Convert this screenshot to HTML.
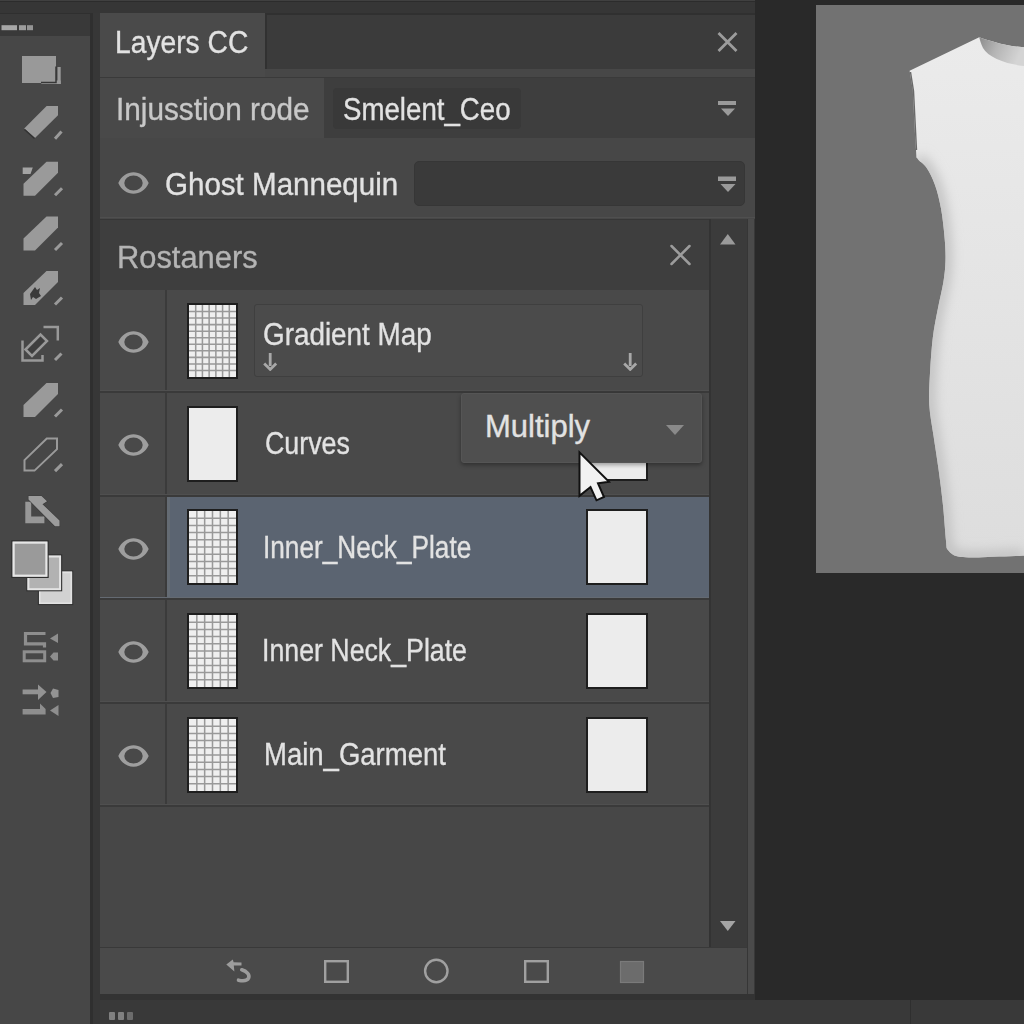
<!DOCTYPE html>
<html><head><meta charset="utf-8">
<style>
*{margin:0;padding:0;box-sizing:border-box}
html,body{width:1024px;height:1024px;overflow:hidden;background:#292929;font-family:"Liberation Sans",sans-serif}
.a{position:absolute}
.t{position:absolute;font-size:31px;line-height:31px;white-space:pre;color:#e2e2e2;transform-origin:0 0;-webkit-text-stroke:0.35px currentColor}
</style></head><body>
<!-- top strip -->
<div class="a" style="left:0;top:0;width:755px;height:14px;background:#363636;border-top:1px solid #404040"></div><div class="a" style="left:0;top:1px;width:755px;height:1px;background:#2c2c2c"></div>
<!-- left toolbar -->
<div class="a" style="left:0;top:13px;width:90px;height:1px;background:#2f2f2f"></div><div class="a" style="left:0;top:14px;width:90px;height:22px;background:#393939"></div>
<div class="a" style="left:0;top:36px;width:90px;height:988px;background:#474747"></div>
<svg class="a" style="left:0;top:0" width="90" height="730" viewBox="0 0 90 730"><rect x="1.5" y="25.2" width="15.5" height="5" fill="#a6a6a6"/><rect x="19" y="25.2" width="7" height="5" fill="#9c9c9c"/><rect x="27" y="25.2" width="6" height="5" fill="#949494"/><rect x="22" y="56" width="34" height="27" fill="#999"/><path d="M57.5,66 V84 H41.5 V81 H57.5" fill="#999"/><rect x="57.5" y="67" width="3.2" height="17" fill="#999"/><rect x="41.5" y="80.5" width="19.2" height="3.5" fill="#999"/><path d="M56,66.5 V82.5 H41" fill="none" stroke="#363636" stroke-width="1.5"/><polygon points="24.2,128.5 46.6,106 58,106 58,115.3 35,138 " fill="#9a9a9a"/><path d="M24.5,129.5 L34.5,138.5" stroke="#333" stroke-width="1.5"/><path d="M55,138.7 L61.5,131.5" stroke="#9a9a9a" stroke-width="3"/><polygon points="22.7,167.6 32.8,167.6 30.5,174 22.7,174" fill="#a4a4a4"/><polygon points="23.5,183.7 46.5,161.7 58,161.7 58,172.7 35,195.7 23.5,195.7" fill="#9a9a9a"/><path d="M55,195.2 L62,188.2" stroke="#9a9a9a" stroke-width="3"/><polygon points="23.5,238.5 46.5,216.5 58,216.5 58,227.5 35,250.5 23.5,250.5" fill="#9a9a9a"/><path d="M55,250.0 L62,243.0" stroke="#9a9a9a" stroke-width="3"/><polygon points="23.5,293 46.5,271 58,271 58,282 35,305 23.5,305" fill="#9a9a9a"/><path d="M55,304.5 L62,297.5" stroke="#9a9a9a" stroke-width="3"/><path d="M30,294 L35,287 L37,290 L40,288 L39,293 L41,296 L36,299 L33,297 L31,300 Z" fill="#3a3a3a"/><path d="M22.5,340.5 V360.5 H42.5 V355" fill="none" stroke="#999" stroke-width="2.5"/><path d="M43.5,327 H57.8 V340.5" fill="none" stroke="#999" stroke-width="2.5"/><polygon points="25.5,349.5 40.5,334.5 47,341 32,356" fill="#3e3e3e" stroke="#999" stroke-width="2.5"/><path d="M55,360 L61.5,353.5" stroke="#9a9a9a" stroke-width="3"/><polygon points="23.5,405 46.5,383 58,383 58,394 35,417 23.5,417" fill="#9a9a9a"/><path d="M55,416.5 L62,409.5" stroke="#9a9a9a" stroke-width="3"/><polygon points="24.5,460.1 46.8,438.6 57,438.6 57,449.1 34.5,470.6 24.5,470.6" fill="none" stroke="#9a9a9a" stroke-width="2"/><path d="M55,471.1 L62,464.1" stroke="#9a9a9a" stroke-width="3"/><path d="M25.3,501.7 H31.2 V516.4 H44.4 V523.2 H25.3 Z" fill="#979797"/><polygon points="28.5,496 41.5,496 47,501.3 42.5,504.2 59.5,520.5 59.5,526.3 55,526.3 28.5,499.5" fill="#9c9c9c" stroke="#3c3c3c" stroke-width="1.2" paint-order="stroke"/><rect x="38.4" y="571" width="34.3" height="33.6" fill="#d2d2d2" stroke="#2e2e2e" stroke-width="1"/><rect x="39.8" y="572.4" width="31.5" height="30.8" fill="none" stroke="#e2e2e2" stroke-width="1.6"/><rect x="26.9" y="555" width="34.7" height="35.7" fill="#b2b2b2" stroke="#2e2e2e" stroke-width="1.2"/><rect x="28.4" y="556.5" width="31.7" height="32.7" fill="none" stroke="#e4e4e4" stroke-width="2"/><rect x="12" y="541" width="36" height="36.3" fill="#9a9a9a" stroke="#2e2e2e" stroke-width="1.4"/><rect x="13.6" y="542.6" width="32.8" height="33.1" fill="none" stroke="#e6e6e6" stroke-width="2.2"/><path d="M45.5,633.5 H25.5 V643.8 H44.5 V647.5" fill="none" stroke="#8e8e8e" stroke-width="3.2"/><rect x="24.2" y="651.8" width="20.5" height="9" fill="none" stroke="#8e8e8e" stroke-width="3"/><polygon points="58,633.5 58,643 50,638.5" fill="#8e8e8e"/><polygon points="58,652.5 58,660.5 53.5,660.5 50,656.5 53.5,652.5" fill="#8e8e8e"/><rect x="22.6" y="689.5" width="17" height="4.8" fill="#939393"/><polygon points="38,684.5 46.5,692 38,700" fill="#939393"/><polygon points="53,688.5 58.5,690 58.5,697 53,698 50.5,693" fill="#939393"/><rect x="22.6" y="709" width="23" height="5.5" fill="#8e8e8e"/><polygon points="40,703.5 45.6,709 40,709" fill="#8e8e8e"/><polygon points="58.5,705 58.5,716 50,710.5" fill="#8e8e8e"/></svg>
<div class="a" style="left:90px;top:13px;width:10px;height:1011px;background:#373737;border-left:3px solid #2f2f2f"></div>

<!-- panel -->
<div class="a" style="left:100px;top:13px;width:655px;height:987px;background:#474747"></div>
<!-- tab bar -->
<div class="a" style="left:100px;top:13px;width:165px;height:65px;background:#4a4a4a"></div>
<div class="a" style="left:265px;top:13px;width:490px;height:56px;background:#3b3b3b;border-top:2px solid #303030;border-left:2px solid #313131"></div>
<div class="a" style="left:265px;top:69px;width:490px;height:8px;background:#474747"></div>
<div class="a" style="left:100px;top:77px;width:655px;height:1px;background:#3a3a3a"></div>
<div class="t" style="left:115px;top:26.6px;transform:scaleX(0.91)">Layers CC</div>


<!-- row 2 -->
<div class="a" style="left:100px;top:78px;width:224px;height:60px;background:#494949"></div>
<div class="a" style="left:324px;top:78px;width:431px;height:60px;background:#3e3e3e"></div>
<div class="a" style="left:333px;top:88px;width:188px;height:41px;background:#393939;border-radius:4px"></div>
<div class="t" style="left:116px;top:93.7px;color:#c8c8c8;transform:scaleX(0.96)">Injusstion rode</div>
<div class="t" style="left:343px;top:93.6px;transform:scaleX(0.892)">Smelent_Ceo</div>

<!-- row 3 -->
<div class="a" style="left:100px;top:138px;width:655px;height:81px;background:#474747"></div>
<div class="a" style="left:100px;top:217px;width:655px;height:1px;background:#4f4f4f"></div>
<div class="a" style="left:414px;top:161px;width:331px;height:45px;background:#3a3a3a;border-radius:5px;border:1px solid #363636"></div>
<div class="t" style="left:164.5px;top:168.9px;transform:scaleX(0.953)">Ghost Mannequin</div>

<!-- row 4 sub header -->
<div class="a" style="left:100px;top:219px;width:609px;height:71px;background:#3e3e3e;border-top:1px solid #363636"></div>
<div class="t" style="left:116.5px;top:241.6px;color:#b4b4b4;transform:scaleX(0.995)">Rostaners</div>

<!-- scrollbar -->
<div class="a" style="left:709px;top:219px;width:38px;height:728px;background:#3b3b3b;border-left:2px solid #333"></div>
<div class="a" style="left:747px;top:219px;width:8px;height:779px;background:#4a4a4a;border-left:1.5px solid #363636;border-right:1px solid #383838"></div>


<!-- close X top -->
<svg class="a" style="left:714px;top:29px" width="27" height="27" viewBox="0 0 27 27"><path d="M4.5,4 L22.5,22 M22.5,4 L4.5,22" stroke="#9c9c9c" stroke-width="2.8"/></svg>
<!-- dropdown icons -->
<svg class="a" style="left:716px;top:99px" width="22" height="19"><rect x="2" y="2" width="18" height="4" fill="#9a9a9a"/><path d="M5,9.5 H19 L12,17 Z" fill="#9a9a9a"/></svg>
<svg class="a" style="left:716px;top:174px" width="22" height="19"><rect x="2" y="2.5" width="18" height="4.5" fill="#9a9a9a"/><path d="M4.5,10 H19.5 L12,18 Z" fill="#9a9a9a"/></svg>
<!-- ghost eye -->
<svg class="a" style="left:113px;top:168px" width="41" height="30" viewBox="-20.5 -15 41 30"><path fill="#9c9c9c" fill-rule="evenodd" d="M-15.2,0 C-9,-14.3 9,-14.3 15.2,0 C9,14.3 -9,14.3 -15.2,0 Z M-9.2,0 A9.2,7.5 0 1 0 9.2,0 A9.2,7.5 0 1 0 -9.2,0 Z"/></svg>
<!-- rostaners X -->
<svg class="a" style="left:667px;top:242px" width="27" height="27" viewBox="0 0 27 27"><path d="M4.5,4 L22.5,22 M22.5,4 L4.5,22" stroke="#9c9c9c" stroke-width="2.5" stroke-linecap="round"/></svg>
<!-- scroll arrows -->
<svg class="a" style="left:716px;top:230px" width="24" height="18"><path d="M4,14.5 H19.5 L11.8,4 Z" fill="#9a9a9a"/></svg>
<svg class="a" style="left:716px;top:918px" width="24" height="18"><path d="M4,3 H19.5 L11.8,13 Z" fill="#a4a4a4"/></svg>

<!-- layer rows -->
<!-- ROWS START -->
<div class="a" style="left:100px;top:290px;width:65px;height:101px;background:#494949"></div>
<div class="a" style="left:165px;top:290px;width:2px;height:101px;background:#3b3b3b"></div>
<div class="a" style="left:167px;top:290px;width:542px;height:101px;background:#494949"></div>
<div class="a" style="left:100px;top:390px;width:609px;height:1px;background:#4f4f4f"></div>
<div class="a" style="left:100px;top:391px;width:609px;height:2px;background:#3a3a3a"></div>
<svg class="a" style="left:113px;top:327px" width="41" height="30" viewBox="-20.5 -15 41 30"><path fill="#9e9e9e" fill-rule="evenodd" d="M-15.2,0 C-9,-14.3 9,-14.3 15.2,0 C9,14.3 -9,14.3 -15.2,0 Z M-9.2,0 A9.2,7.5 0 1 0 9.2,0 A9.2,7.5 0 1 0 -9.2,0 Z"/></svg>
<div class="a" style="left:187px;top:303px;width:51px;height:76px;background:#efefef;border:2px solid #1e1e1e"><svg width="47" height="72" viewBox="0 0 46 71" preserveAspectRatio="none" style="display:block" stroke="#999" stroke-width="1.5"><line x1="6.57" y1="0" x2="6.57" y2="71"/><line x1="13.14" y1="0" x2="13.14" y2="71"/><line x1="19.71" y1="0" x2="19.71" y2="71"/><line x1="26.29" y1="0" x2="26.29" y2="71"/><line x1="32.86" y1="0" x2="32.86" y2="71"/><line x1="39.43" y1="0" x2="39.43" y2="71"/><line x1="0" y1="6.45" x2="46" y2="6.45"/><line x1="0" y1="12.91" x2="46" y2="12.91"/><line x1="0" y1="19.36" x2="46" y2="19.36"/><line x1="0" y1="25.82" x2="46" y2="25.82"/><line x1="0" y1="32.27" x2="46" y2="32.27"/><line x1="0" y1="38.73" x2="46" y2="38.73"/><line x1="0" y1="45.18" x2="46" y2="45.18"/><line x1="0" y1="51.64" x2="46" y2="51.64"/><line x1="0" y1="58.09" x2="46" y2="58.09"/><line x1="0" y1="64.55" x2="46" y2="64.55"/></svg></div>
<div class="a" style="left:100px;top:393px;width:65px;height:102px;background:#494949"></div>
<div class="a" style="left:165px;top:393px;width:2px;height:102px;background:#3b3b3b"></div>
<div class="a" style="left:167px;top:393px;width:542px;height:102px;background:#494949"></div>
<div class="a" style="left:100px;top:494px;width:609px;height:1px;background:#4f4f4f"></div>
<div class="a" style="left:100px;top:495px;width:609px;height:2px;background:#3a3a3a"></div>
<svg class="a" style="left:113px;top:430px" width="41" height="30" viewBox="-20.5 -15 41 30"><path fill="#9e9e9e" fill-rule="evenodd" d="M-15.2,0 C-9,-14.3 9,-14.3 15.2,0 C9,14.3 -9,14.3 -15.2,0 Z M-9.2,0 A9.2,7.5 0 1 0 9.2,0 A9.2,7.5 0 1 0 -9.2,0 Z"/></svg>
<div class="a" style="left:187px;top:406px;width:51px;height:76px;background:#ececec;border:2px solid #1e1e1e"></div>
<div class="a" style="left:586px;top:405px;width:62px;height:76px;background:#ececec;border:2px solid #1e1e1e"></div>
<div class="a" style="left:100px;top:497px;width:65px;height:101px;background:#494949"></div>
<div class="a" style="left:165px;top:497px;width:2px;height:101px;background:#3b3b3b"></div>
<div class="a" style="left:167px;top:497px;width:542px;height:101px;background:#5b6471"></div>
<div class="a" style="left:167px;top:497px;width:3px;height:101px;background:#646b73"></div>
<div class="a" style="left:100px;top:597px;width:609px;height:1px;background:#646a72"></div>
<div class="a" style="left:100px;top:598px;width:609px;height:2px;background:#3a3a3a"></div>
<svg class="a" style="left:113px;top:534px" width="41" height="30" viewBox="-20.5 -15 41 30"><path fill="#9e9e9e" fill-rule="evenodd" d="M-15.2,0 C-9,-14.3 9,-14.3 15.2,0 C9,14.3 -9,14.3 -15.2,0 Z M-9.2,0 A9.2,7.5 0 1 0 9.2,0 A9.2,7.5 0 1 0 -9.2,0 Z"/></svg>
<div class="a" style="left:187px;top:509px;width:51px;height:76px;background:#efefef;border:2px solid #1e1e1e"><svg width="47" height="72" viewBox="0 0 46 71" preserveAspectRatio="none" style="display:block" stroke="#999" stroke-width="1.5"><line x1="7.67" y1="0" x2="7.67" y2="71"/><line x1="15.33" y1="0" x2="15.33" y2="71"/><line x1="23.00" y1="0" x2="23.00" y2="71"/><line x1="30.67" y1="0" x2="30.67" y2="71"/><line x1="38.33" y1="0" x2="38.33" y2="71"/><line x1="0" y1="7.10" x2="46" y2="7.10"/><line x1="0" y1="14.20" x2="46" y2="14.20"/><line x1="0" y1="21.30" x2="46" y2="21.30"/><line x1="0" y1="28.40" x2="46" y2="28.40"/><line x1="0" y1="35.50" x2="46" y2="35.50"/><line x1="0" y1="42.60" x2="46" y2="42.60"/><line x1="0" y1="49.70" x2="46" y2="49.70"/><line x1="0" y1="56.80" x2="46" y2="56.80"/><line x1="0" y1="63.90" x2="46" y2="63.90"/></svg></div>
<div class="a" style="left:586px;top:509px;width:62px;height:76px;background:#ececec;border:2px solid #1e1e1e"></div>
<div class="a" style="left:100px;top:600px;width:65px;height:102px;background:#494949"></div>
<div class="a" style="left:165px;top:600px;width:2px;height:102px;background:#3b3b3b"></div>
<div class="a" style="left:167px;top:600px;width:542px;height:102px;background:#494949"></div>
<div class="a" style="left:100px;top:701px;width:609px;height:1px;background:#4f4f4f"></div>
<div class="a" style="left:100px;top:702px;width:609px;height:2px;background:#3a3a3a"></div>
<svg class="a" style="left:113px;top:637px" width="41" height="30" viewBox="-20.5 -15 41 30"><path fill="#9e9e9e" fill-rule="evenodd" d="M-15.2,0 C-9,-14.3 9,-14.3 15.2,0 C9,14.3 -9,14.3 -15.2,0 Z M-9.2,0 A9.2,7.5 0 1 0 9.2,0 A9.2,7.5 0 1 0 -9.2,0 Z"/></svg>
<div class="a" style="left:187px;top:613px;width:51px;height:76px;background:#efefef;border:2px solid #1e1e1e"><svg width="47" height="72" viewBox="0 0 46 71" preserveAspectRatio="none" style="display:block" stroke="#999" stroke-width="1.5"><line x1="7.67" y1="0" x2="7.67" y2="71"/><line x1="15.33" y1="0" x2="15.33" y2="71"/><line x1="23.00" y1="0" x2="23.00" y2="71"/><line x1="30.67" y1="0" x2="30.67" y2="71"/><line x1="38.33" y1="0" x2="38.33" y2="71"/><line x1="0" y1="7.10" x2="46" y2="7.10"/><line x1="0" y1="14.20" x2="46" y2="14.20"/><line x1="0" y1="21.30" x2="46" y2="21.30"/><line x1="0" y1="28.40" x2="46" y2="28.40"/><line x1="0" y1="35.50" x2="46" y2="35.50"/><line x1="0" y1="42.60" x2="46" y2="42.60"/><line x1="0" y1="49.70" x2="46" y2="49.70"/><line x1="0" y1="56.80" x2="46" y2="56.80"/><line x1="0" y1="63.90" x2="46" y2="63.90"/></svg></div>
<div class="a" style="left:586px;top:613px;width:62px;height:76px;background:#ececec;border:2px solid #1e1e1e"></div>
<div class="a" style="left:100px;top:704px;width:65px;height:101px;background:#494949"></div>
<div class="a" style="left:165px;top:704px;width:2px;height:101px;background:#3b3b3b"></div>
<div class="a" style="left:167px;top:704px;width:542px;height:101px;background:#494949"></div>
<div class="a" style="left:100px;top:804px;width:609px;height:1px;background:#4f4f4f"></div>
<div class="a" style="left:100px;top:805px;width:609px;height:2px;background:#3a3a3a"></div>
<svg class="a" style="left:113px;top:741px" width="41" height="30" viewBox="-20.5 -15 41 30"><path fill="#9e9e9e" fill-rule="evenodd" d="M-15.2,0 C-9,-14.3 9,-14.3 15.2,0 C9,14.3 -9,14.3 -15.2,0 Z M-9.2,0 A9.2,7.5 0 1 0 9.2,0 A9.2,7.5 0 1 0 -9.2,0 Z"/></svg>
<div class="a" style="left:187px;top:717px;width:51px;height:76px;background:#efefef;border:2px solid #1e1e1e"><svg width="47" height="72" viewBox="0 0 46 71" preserveAspectRatio="none" style="display:block" stroke="#999" stroke-width="1.5"><line x1="7.67" y1="0" x2="7.67" y2="71"/><line x1="15.33" y1="0" x2="15.33" y2="71"/><line x1="23.00" y1="0" x2="23.00" y2="71"/><line x1="30.67" y1="0" x2="30.67" y2="71"/><line x1="38.33" y1="0" x2="38.33" y2="71"/><line x1="0" y1="7.10" x2="46" y2="7.10"/><line x1="0" y1="14.20" x2="46" y2="14.20"/><line x1="0" y1="21.30" x2="46" y2="21.30"/><line x1="0" y1="28.40" x2="46" y2="28.40"/><line x1="0" y1="35.50" x2="46" y2="35.50"/><line x1="0" y1="42.60" x2="46" y2="42.60"/><line x1="0" y1="49.70" x2="46" y2="49.70"/><line x1="0" y1="56.80" x2="46" y2="56.80"/><line x1="0" y1="63.90" x2="46" y2="63.90"/></svg></div>
<div class="a" style="left:586px;top:717px;width:62px;height:76px;background:#ececec;border:2px solid #1e1e1e"></div>
<!-- ROWS END -->

<!-- gradient map field -->
<div class="a" style="left:254px;top:304px;width:389px;height:73px;background:#4b4b4b;border:1.5px solid #3f3f3f;border-radius:3px"></div>
<div class="t" style="left:263px;top:318.8px;transform:scaleX(0.898)">Gradient Map</div>
<svg class="a" style="left:262px;top:351px" width="16" height="20" viewBox="0 0 16 20"><path d="M8.2,2 V15 M2.2,12.4 L8.2,18.4 L14.2,12.4" fill="none" stroke="#a8a8a8" stroke-width="2.8"/></svg>
<svg class="a" style="left:622px;top:351px" width="16" height="20" viewBox="0 0 16 20"><path d="M8.2,2 V15 M2.2,12.4 L8.2,18.4 L14.2,12.4" fill="none" stroke="#a8a8a8" stroke-width="2.8"/></svg>
<!-- row texts -->
<div class="t" style="left:265px;top:428px;transform:scaleX(0.865)">Curves</div>
<div class="t" style="left:263px;top:532px;transform:scaleX(0.845)">Inner_Neck_Plate</div>
<div class="t" style="left:262px;top:635px;transform:scaleX(0.862)">Inner Neck_Plate</div>
<div class="t" style="left:264px;top:738.6px;transform:scaleX(0.887)">Main_Garment</div>
<!-- multiply dropdown -->
<div class="a" style="left:461px;top:393px;width:241px;height:70px;background:#4f4f4f;border-radius:3px;box-shadow:0 2px 4px rgba(0,0,0,0.35);border:1px solid #555"></div>
<div class="t" style="left:485px;top:410.8px;transform:scaleX(1.0)">Multiply</div>
<svg class="a" style="left:666px;top:425px" width="18" height="10"><path d="M0,0 H18 L9,10 Z" fill="#8a8a8a"/></svg>


<!-- cursor -->
<svg class="a" style="left:574px;top:448px" width="44" height="58" viewBox="-5.5 -4.3 44 58"><polygon points="0,0 0,43.5 11,34.7 17,48 24.5,44.7 18.5,31 29.5,29.5" fill="#f2f2f2" stroke="#111" stroke-width="2" stroke-linejoin="miter"/></svg>

<!-- empty list -->
<div class="a" style="left:100px;top:807px;width:609px;height:140px;background:#474747"></div>
<!-- bottom toolbar -->
<div class="a" style="left:100px;top:947px;width:647px;height:1px;background:#393939"></div>
<div class="a" style="left:100px;top:948px;width:647px;height:46px;background:#4a4a4a"></div>
<div class="a" style="left:100px;top:994px;width:655px;height:6px;background:#333"></div>
<!-- status bar -->
<div class="a" style="left:100px;top:1000px;width:924px;height:24px;background:#393939"></div>


<!-- bottom toolbar icons -->
<svg class="a" style="left:220px;top:954px" width="440" height="36">
 <g fill="none" stroke="#a0a0a0" stroke-width="2.4">
  <rect x="105.2" y="7.2" width="22.6" height="20.6"/>
  <circle cx="216.3" cy="17" r="11.2"/>
  <rect x="305.2" y="7.2" width="22.6" height="20.6"/>
 </g>
 <rect x="400.5" y="7.5" width="23" height="21" fill="#6c6c6c" stroke="#7a7a7a" stroke-width="1.2"/>
 <path d="M6.3,10.6 L12.8,5.4 L13.6,8.2 L21.5,8.4 L21.5,11.4 L13.8,11.6 L14.4,17.6 Z" fill="#9c9c9c"/>
 <path d="M21.8,15.8 C26.5,17.2 30,20.5 28.6,24 C27.2,26.8 23,27.2 18.5,26.2" fill="none" stroke="#9c9c9c" stroke-width="3.6" stroke-linecap="round"/>
</svg>
<!-- status dots -->
<div class="a" style="left:109px;top:1012px;width:6px;height:8px;background:#808080;border-radius:1px"></div>
<div class="a" style="left:118px;top:1012px;width:6px;height:8px;background:#808080;border-radius:1px"></div>
<div class="a" style="left:127px;top:1012px;width:6px;height:8px;background:#6c6c6c;border-radius:1px"></div>
<div class="a" style="left:910px;top:1000px;width:1px;height:24px;background:#2f2f2f"></div>

<!-- right canvas -->
<div class="a" style="left:816px;top:5px;width:208px;height:568px;background:#727272"></div>

<svg class="a" style="left:816px;top:5px" width="208" height="568" viewBox="816 5 208 568">
 <defs>
  <clipPath id="dc"><path d="M979.2,37.2 L909.6,70.8 L912.8,90.3 C913.3,100.2 915.2,138.6 916.0,150.0 C916.8,161.4 915.9,155.9 917.6,158.8 C919.3,161.7 923.5,163.2 926.4,167.6 C929.3,172.0 932.6,178.2 935.0,185.0 C937.4,191.8 939.4,199.8 941.0,208.6 C942.6,217.4 943.9,229.3 944.6,238.0 C945.4,246.7 945.7,253.7 945.5,261.0 C945.3,268.3 944.6,274.2 943.4,282.0 C942.1,289.8 939.8,298.7 938.0,308.0 C936.2,317.3 934.1,326.9 932.8,337.7 C931.5,348.5 930.6,361.7 930.0,372.9 C929.4,384.1 928.7,394.6 929.3,405.0 C929.9,415.4 931.8,424.1 933.4,435.0 C935.0,445.9 937.1,458.6 938.7,470.4 C940.3,482.1 941.8,493.8 943.0,505.5 C944.2,517.2 945.2,533.3 946.0,540.7 C946.8,548.1 946.0,547.4 948.0,550.0 C950.0,552.6 952.8,555.4 958.0,556.6 C963.2,557.8 968.0,557.5 979.0,557.4 C990.0,557.2 1016.5,556.0 1024.0,555.7  L1024,47.3 C1010,46.5 996,43 979.2,37.2 Z"/></clipPath>
  <filter id="bl" x="-50%" y="-50%" width="200%" height="200%"><feGaussianBlur stdDeviation="6"/></filter>
  <filter id="bl2" x="-50%" y="-50%" width="200%" height="200%"><feGaussianBlur stdDeviation="0.6"/></filter>
  <linearGradient id="bg" x1="0" x2="0" y1="0" y2="1">
   <stop offset="0" stop-color="#ebebeb"/>
   <stop offset="0.35" stop-color="#e6e6e6"/>
   <stop offset="1" stop-color="#dddddd"/>
  </linearGradient>
  <linearGradient id="ng" x1="0" x2="1" y1="0" y2="0.3">
   <stop offset="0" stop-color="#8c8c8c"/>
   <stop offset="0.45" stop-color="#b4b4b4"/>
   <stop offset="1" stop-color="#d4d4d4"/>
  </linearGradient>
 </defs>
 <g filter="url(#bl2)">
 <path fill="url(#bg)" d="M979.2,37.2 L909.6,70.8 L912.8,90.3 C913.3,100.2 915.2,138.6 916.0,150.0 C916.8,161.4 915.9,155.9 917.6,158.8 C919.3,161.7 923.5,163.2 926.4,167.6 C929.3,172.0 932.6,178.2 935.0,185.0 C937.4,191.8 939.4,199.8 941.0,208.6 C942.6,217.4 943.9,229.3 944.6,238.0 C945.4,246.7 945.7,253.7 945.5,261.0 C945.3,268.3 944.6,274.2 943.4,282.0 C942.1,289.8 939.8,298.7 938.0,308.0 C936.2,317.3 934.1,326.9 932.8,337.7 C931.5,348.5 930.6,361.7 930.0,372.9 C929.4,384.1 928.7,394.6 929.3,405.0 C929.9,415.4 931.8,424.1 933.4,435.0 C935.0,445.9 937.1,458.6 938.7,470.4 C940.3,482.1 941.8,493.8 943.0,505.5 C944.2,517.2 945.2,533.3 946.0,540.7 C946.8,548.1 946.0,547.4 948.0,550.0 C950.0,552.6 952.8,555.4 958.0,556.6 C963.2,557.8 968.0,557.5 979.0,557.4 C990.0,557.2 1016.5,556.0 1024.0,555.7  L1024,47.3 C1010,46.5 996,43 979.2,37.2 Z"/>
 <g clip-path="url(#dc)">
  <path d="M917.6,158.8 C919.1,160.3 923.5,163.2 926.4,167.6 C929.3,172.0 932.6,178.2 935.0,185.0 C937.4,191.8 939.4,199.8 941.0,208.6 C942.6,217.4 943.9,229.3 944.6,238.0 C945.4,246.7 945.7,253.7 945.5,261.0 C945.3,268.3 944.6,274.2 943.4,282.0 C942.1,289.8 939.8,298.7 938.0,308.0 C936.2,317.3 934.1,326.9 932.8,337.7 C931.5,348.5 930.6,361.7 930.0,372.9 C929.4,384.1 928.7,394.6 929.3,405.0 C929.9,415.4 931.8,424.1 933.4,435.0 C935.0,445.9 937.1,458.6 938.7,470.4 C940.3,482.1 941.8,493.8 943.0,505.5 C944.2,517.2 945.2,533.3 946.0,540.7 C946.8,548.1 946.0,547.4 948.0,550.0 C950.0,552.6 952.8,555.4 958.0,556.6 C963.2,557.8 968.0,557.5 979.0,557.4 C990.0,557.2 1016.5,556.0 1024.0,555.7 " fill="none" stroke="#c0c0c0" stroke-width="12" filter="url(#bl)"/>
 </g>
 <path fill="url(#ng)" d="M979.2,37.2 C996,43 1010,46.5 1024,47.3 L1024,66 C1005,64 988,57 983,48 C981,44 980,40 979.2,37.2 Z"/>
 <path d="M910.5,72 L913.5,91 L916.5,150" fill="none" stroke="#4a4a4a" stroke-width="1.4" opacity="0.8"/>
 </g>
</svg>

</body></html>
